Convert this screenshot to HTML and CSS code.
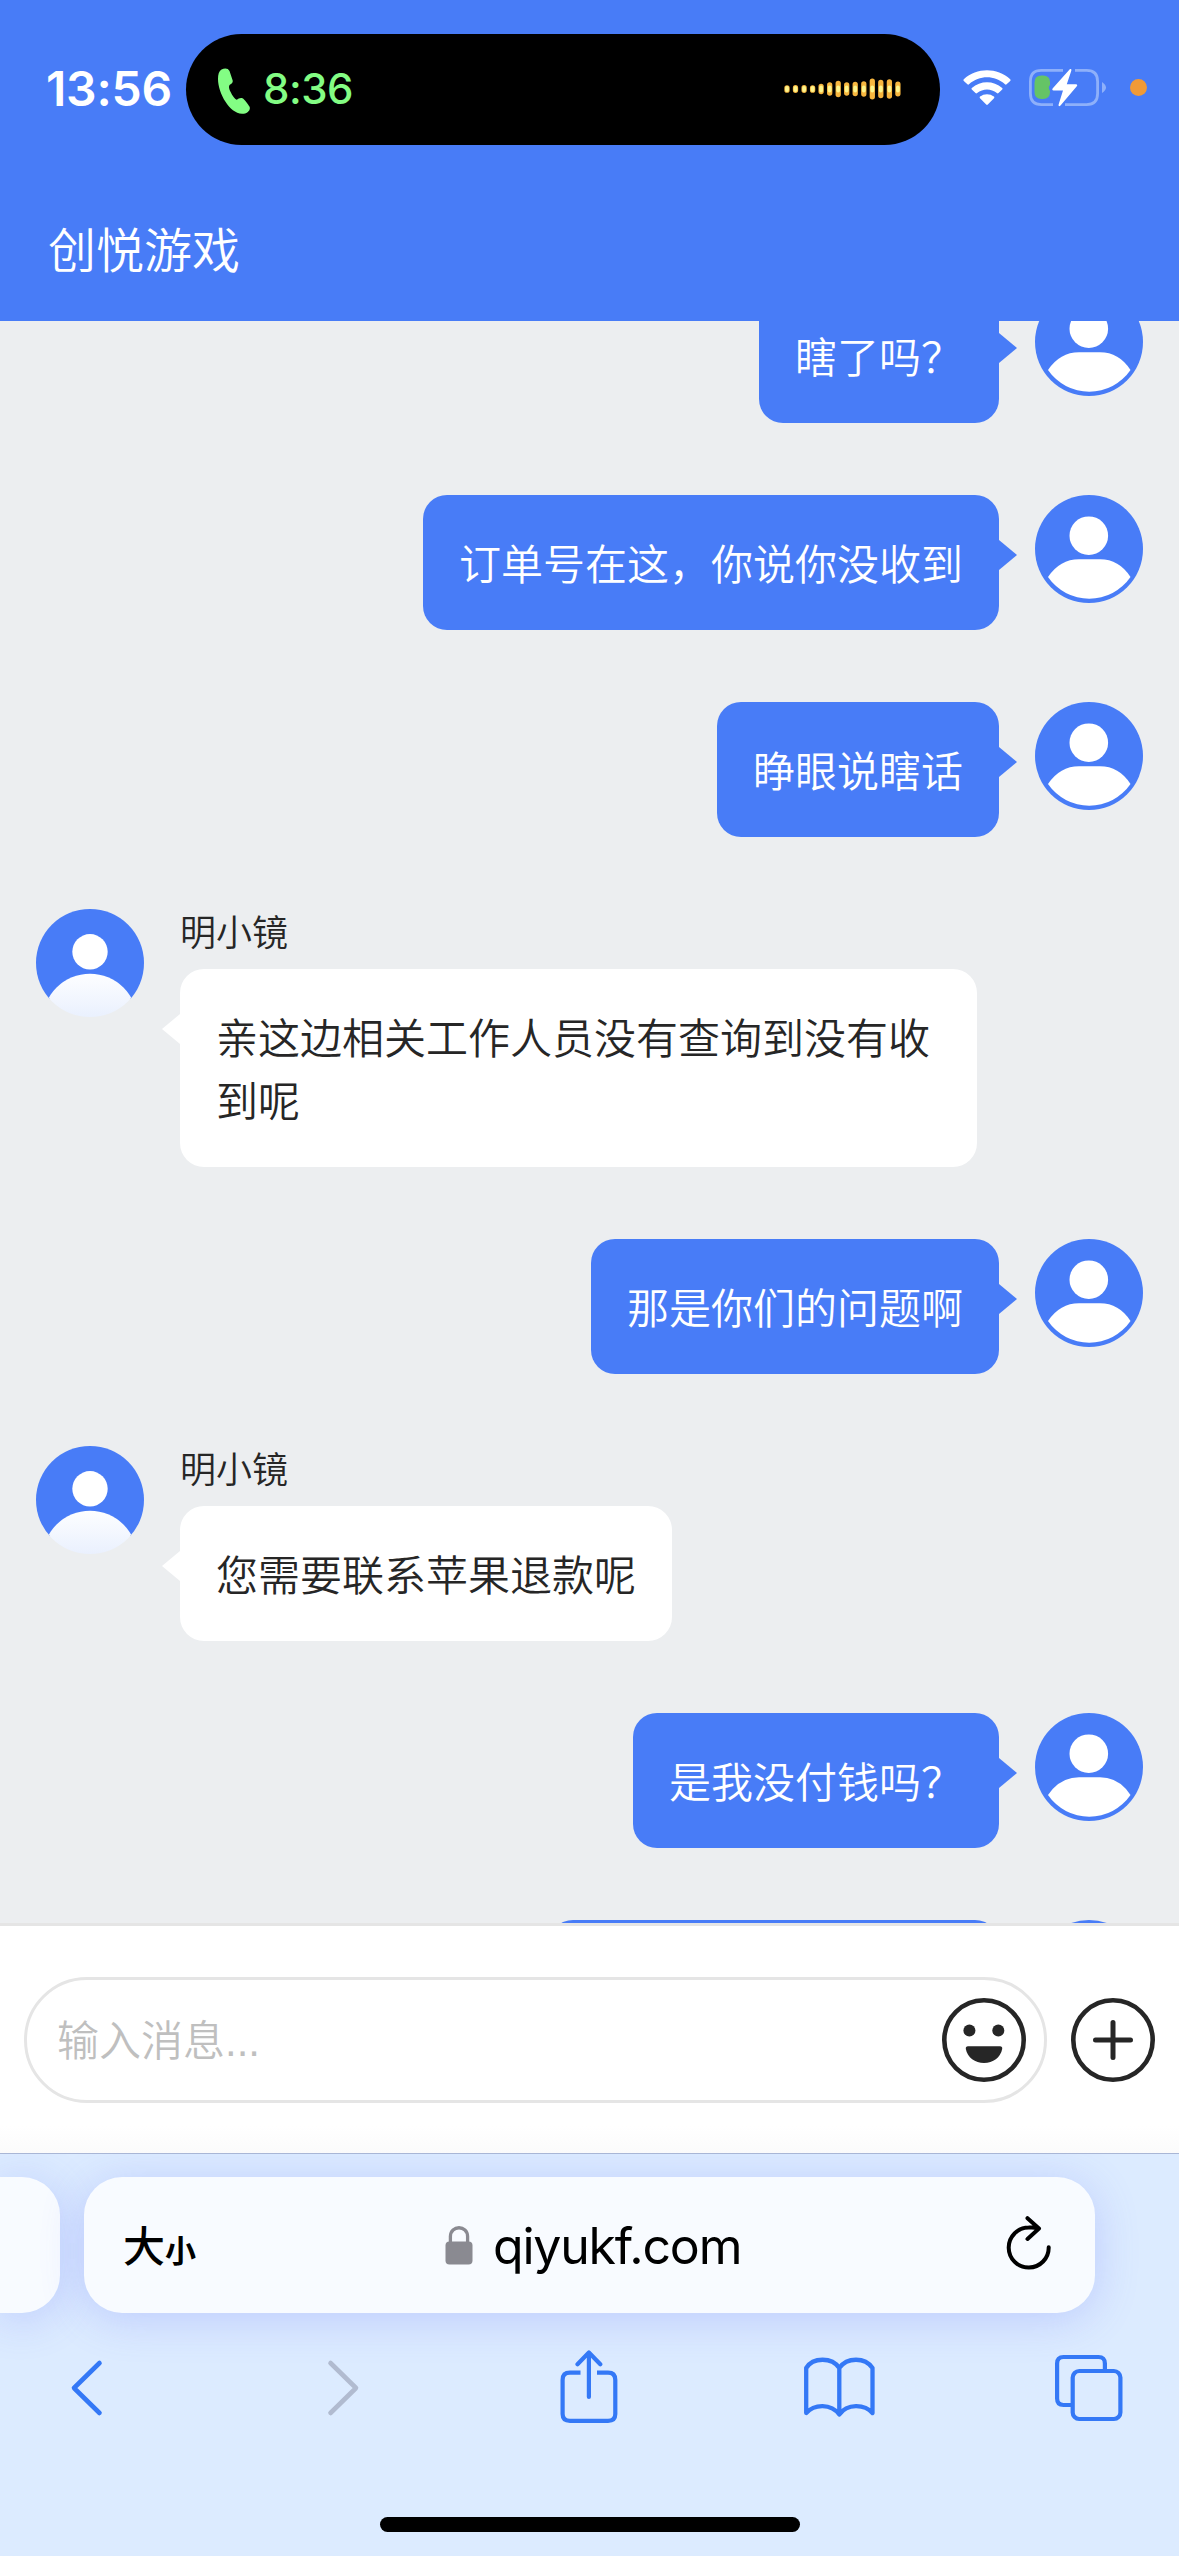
FILE: index.html
```html
<!DOCTYPE html>
<html lang="zh-CN">
<head>
<meta charset="utf-8">
<title>创悦游戏</title>
<link rel="stylesheet" href="styles.css">
</head>
<body>
<svg class="defs" width="0" height="0" aria-hidden="true">
  <defs>
    <linearGradient id="torso" x1="0" y1="0" x2="0" y2="1">
      <stop offset="0" stop-color="#fdfeff"/>
      <stop offset="0.5" stop-color="#e8effe"/>
    </linearGradient>
    <clipPath id="disc"><circle cx="54" cy="54" r="54"/></clipPath>
    <symbol id="visitor" viewBox="0 0 108 108">
      <circle cx="54" cy="54" r="54" fill="#487cf7"/>
      <circle cx="53.8" cy="40.7" r="19.3" fill="#fff"/>
      <path d="M13 82Q25 64.300 44 64.300H65Q84 64.300 95.500 82A50 50 0 0 1 13 82Z" fill="#fff"/>
    </symbol>
    <symbol id="agent" viewBox="0 0 108 108">
      <g clip-path="url(#disc)">
        <rect width="108" height="90" fill="#487cf7"/>
        <circle cx="54" cy="42.800" r="17.700" fill="#fff"/>
        <circle cx="54" cy="112" r="47.300" fill="url(#torso)"/>
      </g>
    </symbol>
  </defs>
</svg>

<div class="screen">
  <header class="header">
    <div class="status">
      <span class="clock">13:56</span>
      <div class="island">
        <svg class="phone" width="34" height="46" viewBox="0 0 34 46"><path d="M4.500 1.600C7.500-.2 11-.1 12.500 3L15.600 12.200C16.200 14.200 14.900 15.500 12.800 16.700C11.400 18.500 12 20.500 13.500 23.800C15.500 28 17.800 31.200 19.500 31.700C21.500 31 23 29.500 25.500 30.300C27.600 31.500 31 36 32.600 38.800C34 42.500 29.500 46 25 45.800C18.500 45.500 12.800 40.500 8.500 33.800C4 27 1 18 1 11C1 6.500 2 3.200 4.500 1.600Z" fill="#83fd84"/></svg>
        <span class="call">8:36</span>
        <svg class="wave" width="118" height="24" viewBox="0 0 118 24">
          <g stroke="#f7b63f" stroke-width="5.300" stroke-linecap="round">
            <path d="M3 10.800V13.200M11.500 10.700V13.300M20.100 10.700V13.300M28.600 10.800V13.200M37.100 9.500V14.500M45.700 8V16M54.200 6.500V17.500M62.700 8V16M71.200 7.500V16.500M79.800 7V17M88.300 4.200V19.800M96.800 5.500V18.500M105.400 5V19M113.900 7.200V16.800"/>
          </g>
          <g stroke="#fdf58c" stroke-width="3.800" stroke-linecap="round">
            <path d="M3 11V13M11.500 11V13M20.100 11V13M28.600 11V13M37.100 10.500V13.500M45.700 10.500V13.500M54.200 10.500V13.500M62.700 10.500V13.500M71.200 10.500V13.500M79.800 10.500V13.500M88.300 10.500V13.500M96.800 10.500V13.500M105.400 10.500V13.500M113.900 10.500V13.500"/>
          </g>
        </svg>
      </div>
      <svg class="wifi" width="48" height="36" viewBox="0 0 48 36" fill="#fff">
        <path d="M.8 9.200C14-2.700 34-2.700 47.200 9.200Q48 10 47.200 10.900L43.600 14.300Q42.800 15 42 14.300C31.500 5 16.500 5 6 14.300Q5.200 15 4.400 14.300L.8 10.900Q0 10 .8 9.200Z"/>
        <path d="M8.800 17.900C17.500 10.300 30.500 10.300 39.200 17.900Q40 18.700 39.200 19.500L35.500 23.100Q34.700 23.800 33.900 23.100C28 18.400 20 18.400 14.100 23.100Q13.300 23.800 12.500 23.100L8.800 19.500Q8 18.700 8.800 17.900Z"/>
        <path d="M17 26.600C21 23.300 27 23.300 31 26.600Q31.800 27.400 31 28.200L24.800 34.600Q24 35.400 23.200 34.600L17 28.200Q16.200 27.400 17 26.600Z"/>
      </svg>
      <svg class="battery" width="80" height="40" viewBox="0 0 80 40">
        <path d="M35 2.400H13.400Q2.400 2.400 2.400 13.400V25.600Q2.400 36.600 13.400 36.600H25M47 2.400H58.600Q69.600 2.400 69.600 13.400V25.600Q69.600 36.600 58.600 36.600H37" fill="none" stroke="#8eb0fa" stroke-width="2.800"/>
        <path d="M74 14Q82 19.500 74 25Z" fill="#8eb0fa"/>
        <path d="M13.500 7.500H15Q22 7.500 22 14V17Q19.500 19.500 22 23V24Q22 31 15 31H13.500Q6.500 31 6.500 24V14.500Q6.500 7.500 13.500 7.500Z" fill="#65c466"/>
        <path d="M42 1Q44 .5 43.300 2.800L38.800 16.200H48Q50 16.600 48.800 18.300L32.500 37.500Q30.200 39.300 30.600 36.500L35 22.500H25.500Q23.500 22 24.800 20.300Z" fill="#fff"/>
      </svg>
      <span class="mic-dot"></span>
    </div>
    <h1 class="title">创悦游戏</h1>
  </header>

  <main class="chat">
    <div class="row mine"><div class="bubble">瞎了吗？</div><svg class="avatar"><use href="#visitor"/></svg></div>
    <div class="row mine"><div class="bubble">订单号在这，你说你没收到</div><svg class="avatar"><use href="#visitor"/></svg></div>
    <div class="row mine"><div class="bubble">睁眼说瞎话</div><svg class="avatar"><use href="#visitor"/></svg></div>
    <div class="row theirs"><svg class="avatar"><use href="#agent"/></svg><div class="body"><div class="name">明小镜</div><div class="bubble">亲这边相关工作人员没有查询到没有收到呢</div></div></div>
    <div class="row mine"><div class="bubble">那是你们的问题啊</div><svg class="avatar"><use href="#visitor"/></svg></div>
    <div class="row theirs"><svg class="avatar"><use href="#agent"/></svg><div class="body"><div class="name">明小镜</div><div class="bubble">您需要联系苹果退款呢</div></div></div>
    <div class="row mine"><div class="bubble">是我没付钱吗？</div><svg class="avatar"><use href="#visitor"/></svg></div>
    <div class="row mine"><div class="bubble pending"></div><svg class="avatar"><use href="#visitor"/></svg></div>
  </main>

  <section class="composer">
    <div class="field">
      <span class="hint">输入消息...</span>
      <svg width="84" height="84" viewBox="0 0 84 84" fill="#262626">
        <circle cx="42" cy="42" r="39.700" fill="none" stroke="#262626" stroke-width="4.600"/>
        <circle cx="27.400" cy="32.400" r="6"/><circle cx="56.300" cy="32.400" r="6"/>
        <path d="M26 48.200H58Q60.500 48.200 60.200 51C58.500 59.500 51 65 42 65S25.500 59.500 23.800 51Q23.500 48.200 26 48.200Z"/>
      </svg>
    </div>
    <svg width="84" height="84" viewBox="0 0 84 84" fill="none" stroke="#262626">
      <circle cx="42" cy="42" r="39.700" stroke-width="4.600"/>
      <path d="M24.500 42H59.500M42 24.500V59.500" stroke-width="5" stroke-linecap="round"/>
    </svg>
  </section>

  <footer class="browser">
    <div class="tabs">
      <div class="tab-prev"></div>
      <div class="address">
        <span class="size"><span class="big">大</span><span class="small">小</span></span>
        <span class="site">
          <svg width="28" height="40" viewBox="0 0 28 40"><path d="M5.400 18V11.500C5.400-.2 22.600-.2 22.600 11.500V18" fill="none" stroke="#8a8a91" stroke-width="3.300"/><rect x=".5" y="16.500" width="27" height="23" rx="4" fill="#8a8a91"/></svg>
          <span class="domain">qiyukf.com</span>
        </span>
        <svg class="reload" width="46" height="56" viewBox="0 0 46 56" fill="none" stroke="#000" stroke-width="4" stroke-linecap="round" stroke-linejoin="round"><path d="M42.700 32.200A20 20 0 1 1 22.700 12.600Q28 12.200 32.500 13.300M21.500 3.200L33 13.500L21.500 24"/></svg>
      </div>
    </div>
    <nav class="tools">
      <svg width="36" height="60" viewBox="0 0 36 60" fill="none" stroke="#3478f6" stroke-width="4.600" stroke-linecap="round" stroke-linejoin="round"><path d="M30.500 5L5 30L30.500 55"/></svg>
      <svg width="36" height="60" viewBox="0 0 36 60" fill="none" stroke="#b1bbd0" stroke-width="4.600" stroke-linecap="round" stroke-linejoin="round"><path d="M5.500 5L31 30L5.500 55"/></svg>
      <svg width="60" height="76" viewBox="0 0 60 76" fill="none" stroke="#3478f6" stroke-width="4.200"><path d="M21.500 22.700H11Q3.600 22.700 3.600 30V64Q3.600 70.800 11 70.800H49Q56.300 70.800 56.300 64V30Q56.300 22.700 49 22.700H38"/><path d="M29.900 47V3M18.500 14.200L29.900 2.500L41.300 14.200" stroke-linecap="round" stroke-linejoin="round"/></svg>
      <svg width="74" height="64" viewBox="0 0 74 64" fill="none" stroke="#3478f6" stroke-width="4.300" stroke-linecap="round" stroke-linejoin="round"><path d="M37.300 12V58.500M37.300 12C30 1 11 1 4.200 12V57C12 48 29 47 37.300 58.500C45 47 63 48 70.500 57V12C63 1 45 1 37.300 12"/></svg>
      <svg width="70" height="68" viewBox="0 0 70 68" fill="none" stroke="#3478f6" stroke-width="4.200"><rect x="18.700" y="17" width="47.700" height="48" rx="6.500"/><path d="M50.900 16V9.500Q50.900 3 44.500 3H9.500Q3.100 3 3.100 9.500V44.500Q3.100 51 9.500 51H18"/></svg>
    </nav>
    <div class="home"></div>
  </footer>
</div>
</body>
</html>
```
FILE: styles.css
```css
* { box-sizing: border-box; }
body { margin: 0; font-family: Inter, "Noto Sans CJK SC", sans-serif; }
svg { display: block; flex: none; }
.defs { position: absolute; }
.screen { width: 1179px; height: 2556px; display: flex; flex-direction: column; overflow: hidden; background: #eceef0; }

.header { height: 321px; flex: none; background: #487cf7; color: #fff; }
.status { display: flex; align-items: center; height: 178px; }
.clock { width: 186px; padding-left: 46px; font-size: 48px; font-weight: 600; letter-spacing: -0.2px; line-height: 60px; white-space: nowrap; }
.island { width: 754px; height: 111px; border-radius: 56px; background: #000; display: flex; align-items: center; padding: 0 38px 0 31px; }
.phone { margin-top: 4px; }
.call { margin: -1px 0 0 12px; font-size: 42px; font-weight: 500; color: #83fd84; letter-spacing: -0.5px; }
.wave { margin-left: auto; }
.wifi { margin: -2px 0 0 23px; }
.battery { margin: -2px 0 0 17px; }
.mic-dot { width: 17px; height: 17px; margin: -3px 0 0 22px; border-radius: 50%; background: #f09a37; }
.title { margin: 33px 0 0 48px; font: 350 48px/72px "Noto Sans CJK SC", sans-serif; }

.chat { height: 1602px; flex: none; overflow: hidden; display: flex; flex-direction: column; gap: 72px; padding: 0 36px; font-family: "Noto Sans CJK SC", sans-serif; font-weight: 350; }
.chat .row:first-child { margin-top: -33px; }
.row { display: flex; align-items: flex-start; gap: 36px; flex: none; }
.mine { justify-content: flex-end; }
.avatar { width: 108px; height: 108px; }
.bubble { position: relative; width: fit-content; max-width: 797px; min-height: 135px; padding: 35px 36px 37px; border-radius: 24px; font-size: 42px; line-height: 63px; }
.bubble::after { content: ""; position: absolute; top: 45px; width: 18px; height: 30px; }
.mine .bubble { background: #487cf7; color: #fff; }
.mine .bubble::after { left: 100%; background: #487cf7; clip-path: polygon(0 0, 100% 50%, 0 100%); }
.theirs .bubble { background: #fff; color: #262626; }
.theirs .bubble::after { right: 100%; background: #fff; clip-path: polygon(100% 0, 0 50%, 100% 100%); }
.pending { width: 450px; }
.name { height: 43px; margin-bottom: 17px; font-size: 36px; line-height: 43px; color: #262626; }

.composer { height: 230px; flex: none; background: linear-gradient(#fff 88%, #fbfbfb); border-top: 3px solid #e5e5e5; display: flex; align-items: center; gap: 24px; padding: 0 24px; }
.field { width: 1023px; height: 126px; border: 3px solid #e5e5e5; border-radius: 63px; display: flex; align-items: center; justify-content: space-between; padding: 0 18px 0 30px; background: #fff; }
.hint { padding-top: 3px; font: 350 42px/63px "Liberation Sans", "Noto Sans CJK SC", sans-serif; color: #bfbfbf; }

.browser { flex: 1; background: #dcebff; border-top: 1px solid #a9b6d6; overflow: hidden; }
.tabs { display: flex; gap: 24px; padding-top: 23px; }
.tab-prev, .address { height: 136px; background: #f8fbff; box-shadow: 0 6px 44px rgba(90, 105, 245, 0.24); }
.tab-prev { width: 60px; border-radius: 0 38px 38px 0; }
.address { width: 1011px; border-radius: 38px; display: grid; grid-template-columns: 322px 561px 46px; align-items: center; padding-left: 39px; color: #000; }
.reload { margin-top: -4px; }
.size { display: flex; align-items: baseline; padding-top: 2px; font-family: "Noto Sans CJK SC", sans-serif; line-height: 60px; }
.big { font-size: 42px; font-weight: 500; }
.small { font-size: 31px; font-weight: 700; }
.site { display: flex; align-items: center; gap: 20px; }
.domain { padding-top: 2px; font-size: 50px; line-height: 60px; letter-spacing: -1.2px; }
.tools { display: grid; grid-template-columns: 256px 233.5px 243.5px 252px 70px; align-items: center; height: 76px; margin-top: 37px; padding-left: 69px; }
.home { width: 420px; height: 15px; margin: 91px 0 0 380px; border-radius: 8px; background: #000; }
```
